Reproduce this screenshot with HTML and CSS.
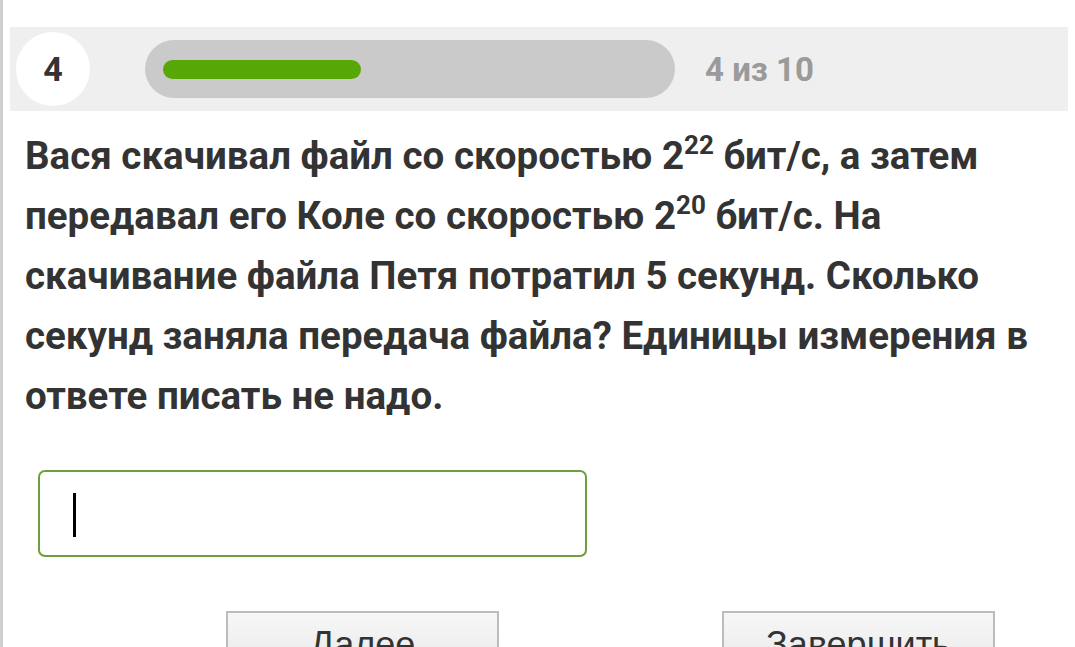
FILE: index.html
```
<!DOCTYPE html>
<html lang="ru">
<head>
<meta charset="utf-8">
<title>Тест</title>
<link rel="stylesheet" href="styles.css">
</head>
<body>
<div class="page">
  <div class="header">
    <div class="num">4</div>
    <div class="track"><div class="fill"></div></div>
    <div class="count">4 из 10</div>
  </div>
  <p class="question">Вася скачивал файл со скоростью 2<sup>22</sup> бит/с, а затем передавал его Коле со скоростью 2<sup>20</sup> бит/с. На скачивание файла Петя потратил 5 секунд. Сколько секунд заняла передача файла? Единицы измерения в ответе писать не надо.</p>
  <div class="answer"><span class="caret"></span></div>
  <div class="buttons">
    <div class="btn">Далее</div>
    <div class="btn">Завершить</div>
  </div>
</div>
</body>
</html>
```
FILE: styles.css
```
html, body {
  margin: 0;
  padding: 0;
  background: #ffffff;
  overflow: hidden;
}
body {
  font-family: Roboto, "Liberation Sans", sans-serif;
}
.page {
  border-left: 3px solid #cfcfcf;
  height: 647px;
  box-sizing: border-box;
  padding: 27px 7px 0 7px;
  overflow: hidden;
}
.header {
  display: flex;
  align-items: center;
  height: 84px;
  background: #efefef;
  padding-left: 6px;
}
.num {
  width: 74px;
  height: 74px;
  border-radius: 50%;
  background: #ffffff;
  display: flex;
  align-items: center;
  justify-content: center;
  font-weight: 700;
  font-size: 34px;
  color: #333333;
}
.track {
  margin-left: 55px;
  width: 530px;
  height: 58px;
  border-radius: 29px;
  background: #cacaca;
  display: flex;
  align-items: center;
}
.fill {
  margin-left: 18px;
  width: 198px;
  height: 19px;
  border-radius: 10px;
  background: #57a807;
}
.count {
  margin-left: 30px;
  font-size: 33px;
  font-weight: 700;
  color: #9a9a9a;
}
.question {
  margin: 15px 0 0 15px;
  width: 1035px;
  font-size: 38.5px;
  font-weight: 700;
  line-height: 60px;
  color: #333333;
}
.question sup {
  font-size: 26px;
  line-height: 0;
  vertical-align: 15px;
}
.answer {
  margin: 44px 0 0 28px;
  width: 549px;
  height: 87px;
  box-sizing: border-box;
  border: 2px solid #6f9d3f;
  border-radius: 7px;
  padding: 21px 0 0 33px;
}
.caret {
  display: block;
  width: 3px;
  height: 44px;
  background: #000000;
}
.buttons {
  display: flex;
  margin: 54px 0 0 216px;
  gap: 223px;
}
.btn {
  width: 273px;
  height: 80px;
  box-sizing: border-box;
  border: 2px solid #bcbcbc;
  background: linear-gradient(#f7f7f7, #e4e4e4);
  padding-top: 14px;
  text-align: center;
  font-family: "Liberation Sans", Arial, sans-serif;
  font-size: 36px;
  line-height: 36px;
  color: #333333;
}
```
